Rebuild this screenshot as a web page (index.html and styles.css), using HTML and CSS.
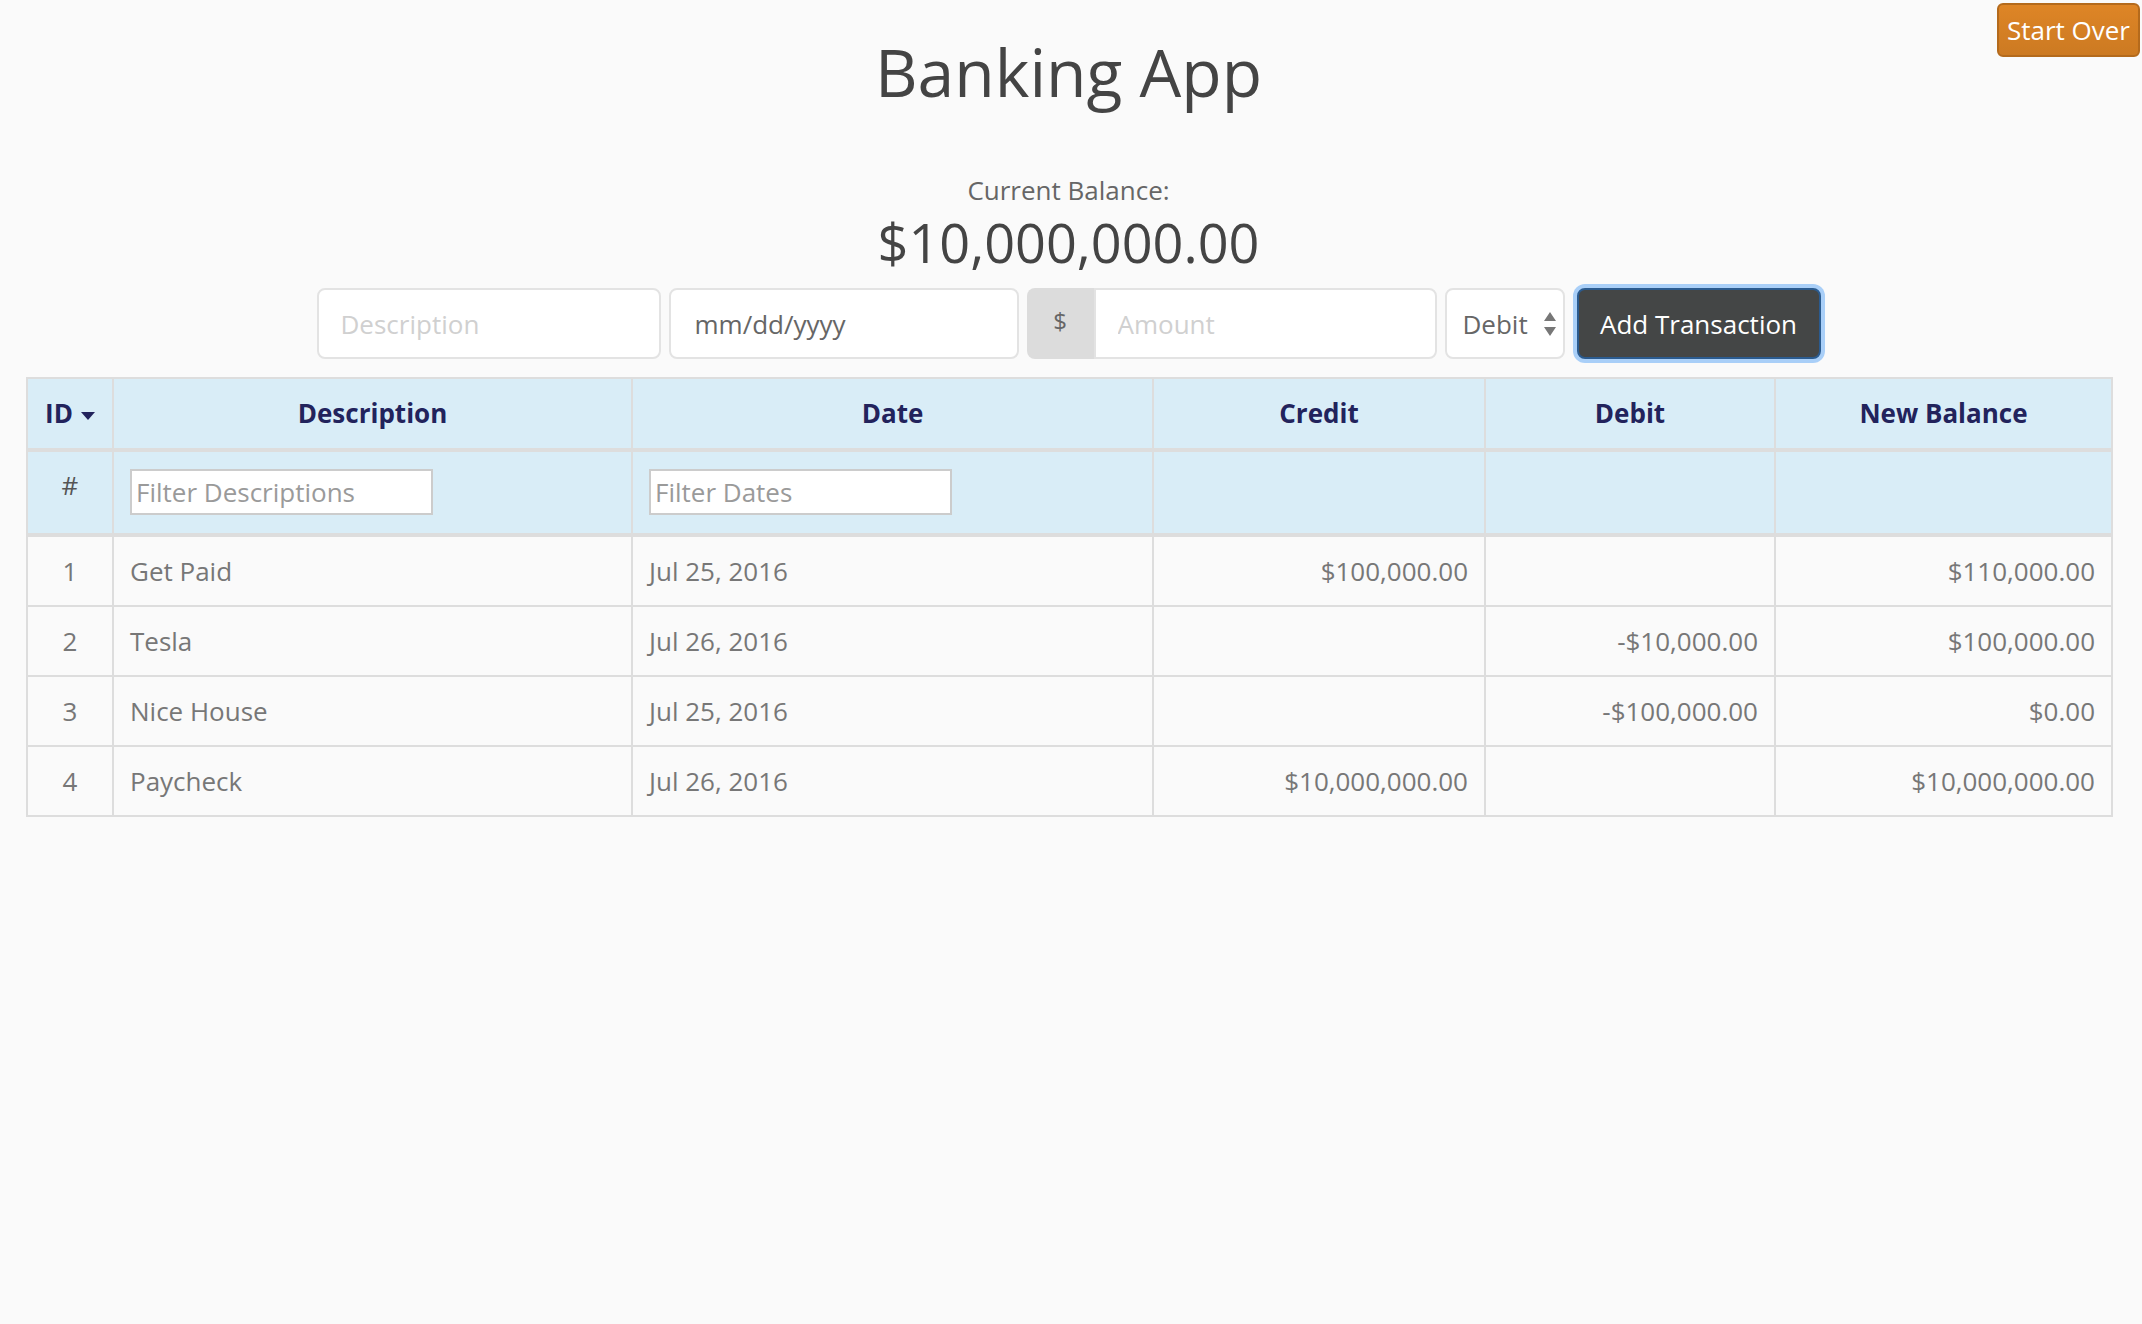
FILE: index.html
```html
<!DOCTYPE html>
<html lang="en">
<head>
<meta charset="utf-8">
<title>Banking App</title>
<link rel="stylesheet" href="styles.css">
</head>
<body>
<button class="start-over">Start Over</button>
<h1 class="title">Banking App</h1>
<div class="balance-label">Current Balance:</div>
<div class="balance">$10,000,000.00</div>
<form class="tx-form">
  <input class="field field-desc" type="text" placeholder="Description">
  <input class="field field-date" type="text" placeholder="mm/dd/yyyy">
  <div class="amount-group">
    <span class="addon">$</span>
    <input class="field field-amount" type="text" placeholder="Amount">
  </div>
  <div class="field select">
    <span>Debit</span>
    <svg class="select-arrows" width="14" height="24" viewBox="0 0 14 24"><path d="M7 0 L13 9 L1 9 Z M7 24 L13 15 L1 15 Z" fill="#777"/></svg>
  </div>
  <button class="add-btn" type="button">Add Transaction</button>
</form>
<table class="tx-table">
  <colgroup>
    <col class="c-id"><col class="c-desc"><col class="c-date"><col class="c-credit"><col class="c-debit"><col class="c-bal">
  </colgroup>
  <thead>
    <tr class="head-row">
      <th>ID<span class="caret"></span></th>
      <th>Description</th>
      <th>Date</th>
      <th>Credit</th>
      <th>Debit</th>
      <th>New Balance</th>
    </tr>
    <tr class="filter-row">
      <th class="hash">#</th>
      <th class="left"><input class="filter" type="text" placeholder="Filter Descriptions"></th>
      <th class="left"><input class="filter" type="text" placeholder="Filter Dates"></th>
      <th></th>
      <th></th>
      <th></th>
    </tr>
  </thead>
  <tbody>
    <tr><td class="id">1</td><td>Get Paid</td><td>Jul 25, 2016</td><td class="num">$100,000.00</td><td class="num"></td><td class="num">$110,000.00</td></tr>
    <tr><td class="id">2</td><td>Tesla</td><td>Jul 26, 2016</td><td class="num"></td><td class="num">-$10,000.00</td><td class="num">$100,000.00</td></tr>
    <tr><td class="id">3</td><td>Nice House</td><td>Jul 25, 2016</td><td class="num"></td><td class="num">-$100,000.00</td><td class="num">$0.00</td></tr>
    <tr><td class="id">4</td><td>Paycheck</td><td>Jul 26, 2016</td><td class="num">$10,000,000.00</td><td class="num"></td><td class="num">$10,000,000.00</td></tr>
  </tbody>
</table>
</body>
</html>
```
FILE: styles.css
```css
* { box-sizing: border-box; }
body {
  margin: 0;
  padding-right: 5px;
  background: #fafafa;
  font-family: "Open Sans", "Liberation Sans", sans-serif;
  font-size: 26px;
  color: #777;
  position: relative;
  min-height: 1324px;
}
.start-over {
  position: absolute;
  top: 3px;
  right: 2px;
  height: 54px;
  padding: 0 8px;
  font-family: inherit;
  font-size: 26px;
  color: #fff;
  background: linear-gradient(#de8526, #cc7a22);
  border: 2px solid #b46a1c;
  border-radius: 6px;
}
.title {
  margin: 35px 0 0;
  font-size: 66px;
  font-weight: 400;
  line-height: 72px;
  color: #444;
  text-align: center;
}
.balance-label {
  margin-top: 65px;
  line-height: 36px;
  font-size: 26px;
  color: #666;
  text-align: center;
}
.balance {
  margin-top: 5px;
  font-size: 54px;
  line-height: 59px;
  color: #444;
  text-align: center;
}
.tx-form {
  display: flex;
  justify-content: center;
  align-items: stretch;
  gap: 8px;
  margin-top: 16px;
  height: 71px;
}
.field {
  height: 71px;
  border: 2px solid #e3e3e3;
  border-radius: 8px;
  background: #fff;
  font-family: inherit;
  font-size: 26px;
  color: #555;
  padding: 0 22px;
  outline: none;
}
.field::placeholder { color: #d0d0d0; }
.field-desc { width: 344px; }
.field-date { width: 350px; padding-left: 24px; }
.field-date::placeholder { color: #666; }
.amount-group { display: flex; }
.addon {
  width: 67px;
  background: #dcdcdc;
  border-radius: 8px 0 0 8px;
  display: flex;
  align-items: center;
  justify-content: center;
  font-size: 24px;
  color: #666;
  padding-bottom: 6px;
}
.field-amount {
  width: 343px;
  border-radius: 0 8px 8px 0;
}
.select {
  width: 120px;
  display: flex;
  align-items: center;
  justify-content: space-between;
  padding: 0 6px 0 16px;
  color: #666;
}
.add-btn {
  margin-left: 4px;
  width: 244px;
  height: 71px;
  background: #444646;
  color: #fff;
  font-family: inherit;
  font-size: 26px;
  border: 2px solid #2b5b8f;
  border-radius: 8px;
  box-shadow: 0 0 0 4px #a9cff8;
  padding: 0;
}
.tx-table {
  margin: 18px 0 0 26px;
  width: 2085px;
  border-collapse: collapse;
  table-layout: fixed;
  border: 2px solid #dddddd;
}
.c-id { width: 86px; }
.c-desc { width: 519px; }
.c-date { width: 521px; }
.c-credit { width: 332px; }
.c-debit { width: 290px; }
.c-bal { width: 337px; }
.tx-table th, .tx-table td {
  border: 2px solid #dddddd;
  padding: 16px 16px;
  line-height: 36px;
  font-size: 26px;
}
.tx-table th {
  background: #d9edf7;
  color: #22235c;
  font-weight: 700;
  text-align: center;
}
.head-row th { border-bottom-width: 4px; line-height: 37px; }
.filter-row th { border-bottom-width: 4px; font-weight: 400; padding-top: 15px; padding-bottom: 18px; vertical-align: top; }
.filter-row .hash { color: #555; }
.filter-row .left { text-align: left; }
.caret {
  display: inline-block;
  width: 0;
  height: 0;
  margin-left: 8px;
  vertical-align: middle;
  border-left: 7px solid transparent;
  border-right: 7px solid transparent;
  border-top: 8px solid #22235c;
}
.filter {
  width: 303px;
  height: 46px;
  border: 2px solid #cccccc;
  background: #fff;
  font-family: inherit;
  font-size: 26px;
  padding: 0 4px;
  outline: none;
  display: block;
  margin-top: 2px;
}
.filter::placeholder { color: #9a9a9a; }
.tx-table td { color: #777; }
.tx-table td.id { text-align: center; }
.tx-table td.num { text-align: right; }
```
